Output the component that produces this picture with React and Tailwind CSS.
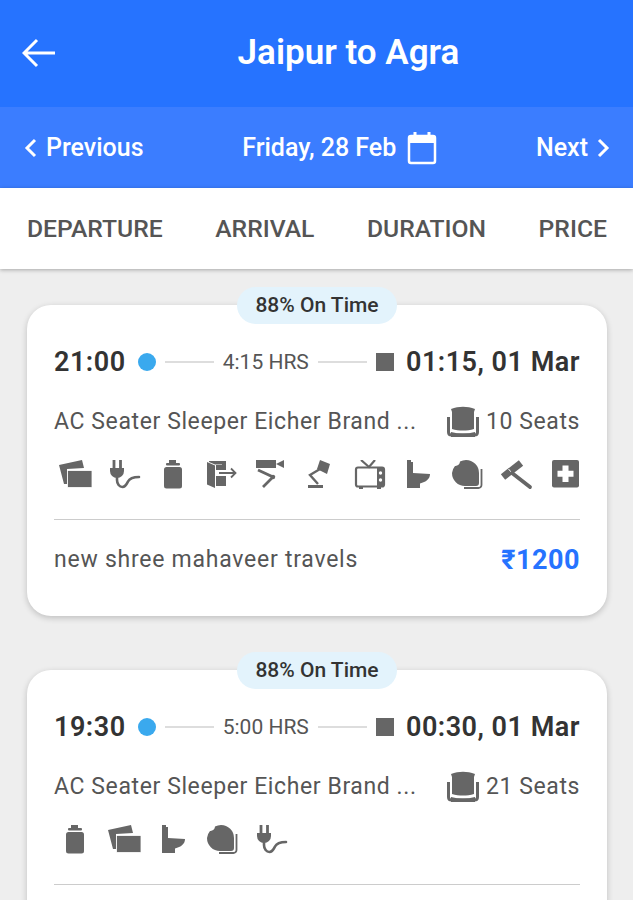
import React from "react";

const G = "#666666";
const Ico = ({ children }) => (
  <svg width="36" height="30" viewBox="0 0 36 30" fill="none" className="block shrink-0">{children}</svg>
);

const Screen = () => (
  <Ico>
    <path d="M2 5L25 0l2 8-17 1v15H7z" fill={G} />
    <rect x="10.500" y="10.500" width="24.500" height="17" fill={G} stroke="#fff" strokeWidth="0.800" />
  </Ico>
);
const Plug = () => (
  <Ico>
    <path d="M8 0v9M14.500 0v9" stroke={G} strokeWidth="2.800" />
    <path d="M4 8h14v3a7 7 0 0 1-14 0z" fill={G} />
    <path d="M11 17v3c0 4 2.500 7 5.500 7s4-2.500 5.500-5.500 4-4.500 11-4.500" stroke={G} strokeWidth="2.600" strokeLinecap="round" />
  </Ico>
);
const Bottle = () => (
  <Ico>
    <path d="M14 0h7v3h-7z" fill={G} />
    <rect x="11" y="3" width="14" height="2.500" rx="1" fill={G} />
    <rect x="9" y="7" width="18" height="21.500" rx="2.500" fill={G} />
  </Ico>
);
const Exit = () => (
  <Ico>
    <path d="M3 2l8 3.500V28l-8-3.500z" fill={G} />
    <path d="M5 1h17v9h-4V4.500H11L5 2z" fill={G} />
    <path d="M12 5h10v5H12zM12 16h10v10H12z" fill={G} />
    <path d="M15 13h16M27 8.500l4.500 4.500-4.500 4.500" stroke={G} strokeWidth="1.800" />
  </Ico>
);
const Cctv = () => (
  <Ico>
    <rect x="3" y="0" width="20" height="8" fill={G} />
    <path d="M23 4l8-4v8z" fill={G} />
    <path d="M5 10l15 7-10 10" stroke={G} strokeWidth="2.800" />
    <circle cx="20" cy="17" r="2.200" fill={G} />
  </Ico>
);
const Lamp = () => (
  <Ico>
    <path d="M18 0l10 4-3 10-10-5z" fill={G} />
    <path d="M18 9L8 15l8 9" stroke={G} strokeWidth="2.400" />
    <path d="M6 25h15v3H6z" fill={G} />
  </Ico>
);
const Tv = () => (
  <Ico>
    <path d="M10 0l8 7 6-7" stroke={G} strokeWidth="2.200" />
    <rect x="5" y="7.500" width="28" height="19" rx="2" stroke={G} strokeWidth="2.200" />
    <rect x="26" y="8" width="7" height="18" fill={G} />
    <circle cx="29.500" cy="13" r="1.700" fill="#fff" />
    <circle cx="29.500" cy="20" r="1.700" fill="#fff" />
    <path d="M8 27h4v2H8zM26 27h4v2h-4z" fill={G} />
  </Ico>
);
const Toilet = () => (
  <Ico>
    <path d="M7 0h4v2h2v11l17 1c0 5-4 8-10 9.500V28H7z" fill={G} />
  </Ico>
);
const Pillow = () => (
  <Ico>
    <path d="M17 0A13 13 0 0 1 30 13V23a3 3 0 0 1-3 3H16A13 13 0 0 1 3 13 A13 13 0 0 1 6 6 A4.500 4.500 0 0 0 11 1.500 A13 13 0 0 1 17 0z" fill={G} />
    <path d="M32.500 9V25a3 3 0 0 1-3 3H15" stroke={G} strokeWidth="1.800" />
  </Ico>
);
const Hammer = () => (
  <Ico>
    <path d="M5 17l18-14" stroke={G} strokeWidth="7" />
    <path d="M10.500 9l6 7" stroke="#fff" strokeWidth="1" />
    <path d="M14 13l18 14" stroke={G} strokeWidth="3.800" strokeLinecap="round" />
  </Ico>
);
const Med = () => (
  <Ico>
    <rect x="5" y="0" width="27" height="27.500" rx="2" fill={G} />
    <path d="M18.500 5.500v16.500M10.500 13.750h16" stroke="#fff" strokeWidth="6" />
  </Ico>
);
const Seat = () => (
  <svg width="34" height="34" viewBox="0 0 34 34" fill="none" className="block shrink-0">
    <path d="M5 4c8-3 16-3 24 0l-1 3v17c-7 2-15 2-22 0V7z" fill={G} />
    <path d="M2.500 12v15c0 2 1 3 3 3h23c2 0 3-1 3-3V12" stroke={G} strokeWidth="3" />
    <path d="M5 27c8 2 16 2 24 0v5H5z" fill={G} />
  </svg>
);

const Card = ({ start, dur, end, seats, icons, operator, price }) => (
  <div className="relative h-[311px] rounded-[24px] bg-white shadow-[0_2px_6px_rgba(0,0,0,0.2)] mb-[54px] px-[27px]">
    <div className="absolute left-[210px] top-[-18px] w-[160px] h-[37px] rounded-full bg-[#e3f3fc] flex items-center justify-center text-[21px] font-medium text-[#333]">88% On Time</div>
    <div className="flex items-center h-[38px] pt-[38px] box-content">
      <span className="text-[27px] font-semibold text-[#333] tracking-[0.5px] leading-none">{start}</span>
      <span className="w-[18px] h-[18px] rounded-full bg-[#3aa9ee] ml-[12px]" />
      <span className="w-[49px] h-[2px] bg-[#dddddd] ml-[9px]" />
      <span className="flex-1 text-center text-[21px] text-[#555] whitespace-nowrap mt-[2px]">{dur}</span>
      <span className="w-[49px] h-[2px] bg-[#dddddd]" />
      <span className="w-[18px] h-[18px] bg-[#666] ml-[9px]" />
      <span className="text-[27px] font-semibold text-[#333] ml-[12px] tracking-[0.5px] leading-none whitespace-nowrap">{end}</span>
    </div>
    <div className="flex items-center justify-between h-[38px] mt-[22px] text-[23px] text-[#555] tracking-[0.6px]">
      <span className="whitespace-nowrap">AC Seater Sleeper Eicher Brand ...</span>
      <span className="flex items-center gap-[6px] whitespace-nowrap"><Seat />{seats}</span>
    </div>
    <div className="flex items-center gap-[13px] ml-[3px] mt-[19px] h-[30px]">
      {icons.map((I, i) => <I key={i} />)}
    </div>
    <div className="h-px bg-[#ccc] mt-[29px]" />
    {operator && (
      <div className="flex items-center justify-between mt-[20px] h-[40px]">
        <span className="text-[23px] text-[#555] tracking-[0.75px]">{operator}</span>
        <span className="text-[27px] font-bold text-[#2673ff] tracking-[0.5px]">{price}</span>
      </div>
    )}
  </div>
);

export default function App() {
  return (
    <div className="h-[900px] w-[633px] overflow-hidden bg-[#eeeeee] font-['Roboto',sans-serif]">
      <div className="relative h-[107px] bg-[#2673ff] flex items-center justify-center text-white">
        <svg className="absolute left-[22px] top-[38px]" width="34" height="30" viewBox="0 0 34 30" fill="none">
          <path d="M33 15H3M15 2L2 15l13 13" stroke="#fff" strokeWidth="3" />
        </svg>
        <span className="text-[35px] font-semibold leading-none ml-[64px] pb-[2px]">Jaipur to Agra</span>
      </div>
      <div className="h-[81px] bg-[#3b7dff] flex items-center justify-between pl-[24px] pr-[23px] text-white text-[25px] font-medium">
        <span className="flex items-center gap-[9px]">
          <svg width="13" height="20" viewBox="0 0 13 20" fill="none"><path d="M11 2L3 10l8 8" stroke="#fff" strokeWidth="3" /></svg>
          Previous
        </span>
        <span className="flex items-center gap-[11px]">
          Friday, 28 Feb
          <svg width="30" height="34" viewBox="0 0 30 34" fill="none">
            <rect x="2" y="5" width="26" height="27" rx="2" stroke="#fff" strokeWidth="2.500" />
            <path d="M2 5h26v7H2z" fill="#fff" />
            <path d="M8 1v5M22 1v5" stroke="#fff" strokeWidth="3" />
          </svg>
        </span>
        <span className="flex items-center gap-[9px]">
          Next
          <svg width="13" height="20" viewBox="0 0 13 20" fill="none"><path d="M2 2l8 8-8 8" stroke="#fff" strokeWidth="3" /></svg>
        </span>
      </div>
      <div className="h-[81px] bg-white shadow-[0_1px_4px_rgba(0,0,0,0.3)] flex items-center justify-between pl-[27px] pr-[26px] text-[24.7px] font-medium text-[#555]">
        <span>DEPARTURE</span><span>ARRIVAL</span><span>DURATION</span><span>PRICE</span>
      </div>
      <div className="pl-[27px] pr-[26px] pt-[36px]">
        <Card start="21:00" dur="4:15 HRS" end="01:15, 01 Mar" seats="10 Seats" operator="new shree mahaveer travels" price="₹1200"
          icons={[Screen, Plug, Bottle, Exit, Cctv, Lamp, Tv, Toilet, Pillow, Hammer, Med]} />
        <Card start="19:30" dur="5:00 HRS" end="00:30, 01 Mar" seats="21 Seats"
          icons={[Bottle, Screen, Toilet, Pillow, Plug]} />
      </div>
    </div>
  );
}
